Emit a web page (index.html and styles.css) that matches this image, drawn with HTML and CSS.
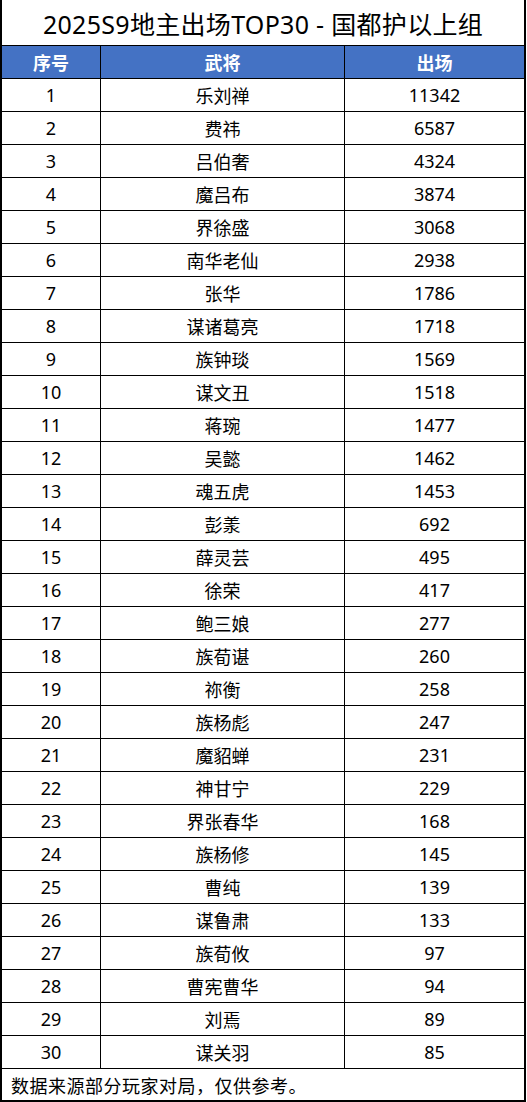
FILE: index.html
```html
<!DOCTYPE html>
<html lang="zh-CN">
<head>
<meta charset="utf-8">
<title>2025S9地主出场TOP30 - 国都护以上组</title>
<link rel="stylesheet" href="styles.css">
</head>
<body>
<div class="sheet">
  <div class="title">2025S9地主出场TOP30 - 国都护以上组</div>
  <div class="row head"><div class="c1">序号</div><div class="c2">武将</div><div class="c3">出场</div></div>
  <div class="row"><div class="c1">1</div><div class="c2">乐刘禅</div><div class="c3">11342</div></div>
  <div class="row"><div class="c1">2</div><div class="c2">费祎</div><div class="c3">6587</div></div>
  <div class="row"><div class="c1">3</div><div class="c2">吕伯奢</div><div class="c3">4324</div></div>
  <div class="row"><div class="c1">4</div><div class="c2">魔吕布</div><div class="c3">3874</div></div>
  <div class="row"><div class="c1">5</div><div class="c2">界徐盛</div><div class="c3">3068</div></div>
  <div class="row"><div class="c1">6</div><div class="c2">南华老仙</div><div class="c3">2938</div></div>
  <div class="row"><div class="c1">7</div><div class="c2">张华</div><div class="c3">1786</div></div>
  <div class="row"><div class="c1">8</div><div class="c2">谋诸葛亮</div><div class="c3">1718</div></div>
  <div class="row"><div class="c1">9</div><div class="c2">族钟琰</div><div class="c3">1569</div></div>
  <div class="row"><div class="c1">10</div><div class="c2">谋文丑</div><div class="c3">1518</div></div>
  <div class="row"><div class="c1">11</div><div class="c2">蒋琬</div><div class="c3">1477</div></div>
  <div class="row"><div class="c1">12</div><div class="c2">吴懿</div><div class="c3">1462</div></div>
  <div class="row"><div class="c1">13</div><div class="c2">魂五虎</div><div class="c3">1453</div></div>
  <div class="row"><div class="c1">14</div><div class="c2">彭羕</div><div class="c3">692</div></div>
  <div class="row"><div class="c1">15</div><div class="c2">薛灵芸</div><div class="c3">495</div></div>
  <div class="row"><div class="c1">16</div><div class="c2">徐荣</div><div class="c3">417</div></div>
  <div class="row"><div class="c1">17</div><div class="c2">鲍三娘</div><div class="c3">277</div></div>
  <div class="row"><div class="c1">18</div><div class="c2">族荀谌</div><div class="c3">260</div></div>
  <div class="row"><div class="c1">19</div><div class="c2">祢衡</div><div class="c3">258</div></div>
  <div class="row"><div class="c1">20</div><div class="c2">族杨彪</div><div class="c3">247</div></div>
  <div class="row"><div class="c1">21</div><div class="c2">魔貂蝉</div><div class="c3">231</div></div>
  <div class="row"><div class="c1">22</div><div class="c2">神甘宁</div><div class="c3">229</div></div>
  <div class="row"><div class="c1">23</div><div class="c2">界张春华</div><div class="c3">168</div></div>
  <div class="row"><div class="c1">24</div><div class="c2">族杨修</div><div class="c3">145</div></div>
  <div class="row"><div class="c1">25</div><div class="c2">曹纯</div><div class="c3">139</div></div>
  <div class="row"><div class="c1">26</div><div class="c2">谋鲁肃</div><div class="c3">133</div></div>
  <div class="row"><div class="c1">27</div><div class="c2">族荀攸</div><div class="c3">97</div></div>
  <div class="row"><div class="c1">28</div><div class="c2">曹宪曹华</div><div class="c3">94</div></div>
  <div class="row"><div class="c1">29</div><div class="c2">刘焉</div><div class="c3">89</div></div>
  <div class="row"><div class="c1">30</div><div class="c2">谋关羽</div><div class="c3">85</div></div>
  <div class="note">数据来源部分玩家对局，仅供参考。</div>
</div>
</body>
</html>
```
FILE: styles.css
```css
html, body {
  margin: 0;
  padding: 0;
  background: #ffffff;
}
body {
  font-family: "Noto Sans", "Noto Sans CJK SC", sans-serif;
  color: #000000;
}
.sheet {
  box-sizing: border-box;
  width: 526px;
  border-left: 2px solid #000;
  border-right: 2px solid #000;
  border-bottom: 2px solid #000;
  display: flex;
  flex-direction: column;
}
.title {
  height: 45px;
  border-bottom: 1px solid #000;
  display: flex;
  align-items: center;
  justify-content: center;
  font-size: 25px;
  letter-spacing: 0.3px;
}
.row {
  display: grid;
  grid-template-columns: 99px 244px 179px;
  height: 33px;
  box-sizing: border-box;
  border-bottom: 1px solid #000;
  font-size: 18px;
}
.row > div {
  display: flex;
  align-items: center;
  justify-content: center;
  box-sizing: border-box;
}
.row .c1, .row .c2 {
  border-right: 1px solid #000;
}
.head {
  background: #4472c4;
  color: #ffffff;
  font-weight: bold;
}
.note {
  height: 31px;
  display: flex;
  align-items: center;
  padding-left: 9px;
  font-size: 18px;
  letter-spacing: 0.5px;
}
```
